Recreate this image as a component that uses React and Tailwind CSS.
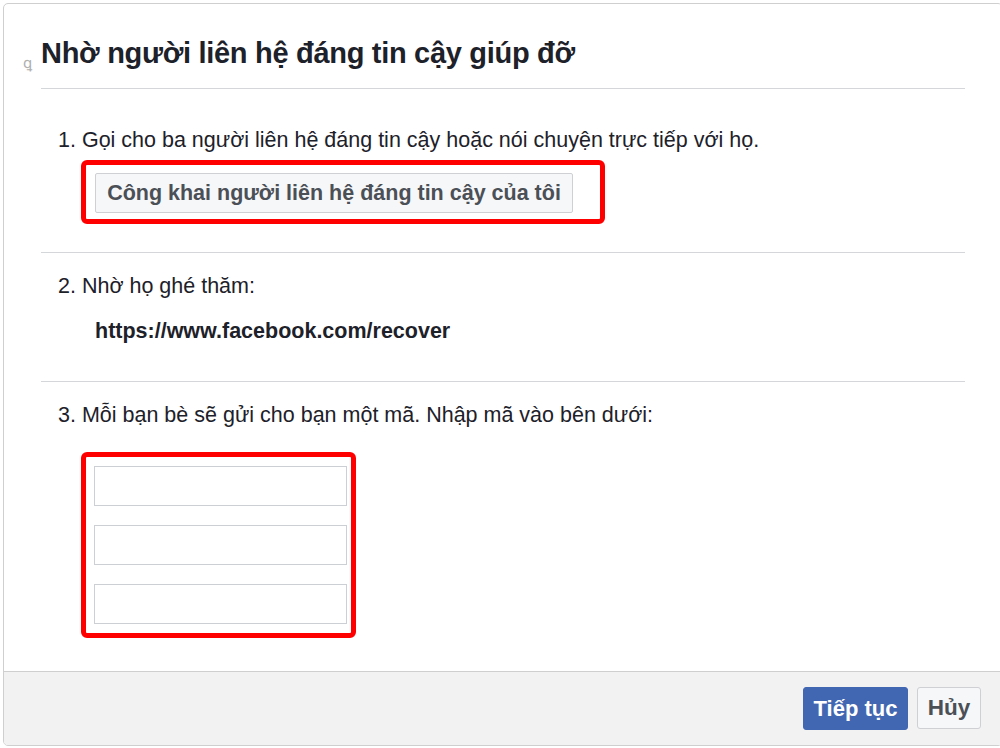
import React from 'react';

const font = { fontFamily: '"Liberation Sans", Arial, sans-serif' };

const Divider = () => <div className="h-px bg-[#d4d6da]" />;

export default function App() {
  return (
    <div className="w-[1000px] h-[748px] overflow-hidden bg-white" style={font}>
      <div className="ml-[3px] mt-[3px] w-[1000px] h-[743px] border border-[#cfcfcf] rounded-[5px] flex flex-col overflow-hidden">
        <div className="flex-1 px-[37px]">
          <div className="relative pt-[36px] pb-[21px] leading-[27px]">
            <span className="absolute left-[-18px] top-[50px] text-[15px] leading-[18px] text-[#b0b0b0]">ꝗ</span>
            <h1 className="text-[29px] font-bold text-[#1d2129] tracking-[-0.3px]">
              Nhờ người liên hệ đáng tin cậy giúp đỡ
            </h1>
          </div>
          <Divider />

          <div className="pt-[39px] pb-[28px]">
            <p className="ml-[17px] text-[21.5px] leading-[24px] text-[#1d2129]">
              1. Gọi cho ba người liên hệ đáng tin cậy hoặc nói chuyện trực tiếp với họ.
            </p>
            <div className="mt-[8px] ml-[40px] w-[524px] h-[64px] border-[5px] border-[#ff0000] rounded-[6px] pl-[9px] pt-[8px]">
              <button className="w-[478px] h-[40px] bg-[#f6f7f9] border border-[#ced0d4] rounded-[2px] text-[21.5px] font-bold text-[#4b4f56]">
                Công khai người liên hệ đáng tin cậy của tôi
              </button>
            </div>
          </div>
          <Divider />

          <div className="pt-[21px] pb-[38px]">
            <p className="ml-[17px] text-[21.5px] leading-[24px] text-[#1d2129]">2. Nhờ họ ghé thăm:</p>
            <p className="mt-[21px] ml-[54px] text-[21.5px] leading-[24px] font-bold text-[#1d2129]">
              https://www.facebook.com/recover
            </p>
          </div>
          <Divider />

          <div className="pt-[21px]">
            <p className="ml-[17px] text-[21.5px] leading-[24px] text-[#1d2129]">
              3. Mỗi bạn bè sẽ gửi cho bạn một mã. Nhập mã vào bên dưới:
            </p>
            <div className="mt-[25px] ml-[40px] w-[275px] h-[186px] border-[5px] border-[#ff0000] rounded-[6px] pl-[8px] pt-[9px] flex flex-col gap-[19px]">
              <input className="w-[253px] h-[40px] border border-[#ccd0d5] bg-white" />
              <input className="w-[253px] h-[40px] border border-[#ccd0d5] bg-white" />
              <input className="w-[253px] h-[40px] border border-[#ccd0d5] bg-white" />
            </div>
          </div>
        </div>

        <div className="h-[74px] border-t border-[#cfcfcf] bg-[#f2f2f2] flex items-start justify-end gap-[9px] pt-[15px] pr-[21px]">
          <button className="w-[105px] h-[43px] bg-[#4267b2] border border-[#4267b2] rounded-[3px] text-white text-[22px] font-bold">
            Tiếp tục
          </button>
          <button className="w-[64px] h-[42px] bg-[#f6f7f9] border border-[#ced0d4] rounded-[3px] text-[#4b4f56] text-[22.5px] font-bold">
            Hủy
          </button>
        </div>
      </div>
    </div>
  );
}
